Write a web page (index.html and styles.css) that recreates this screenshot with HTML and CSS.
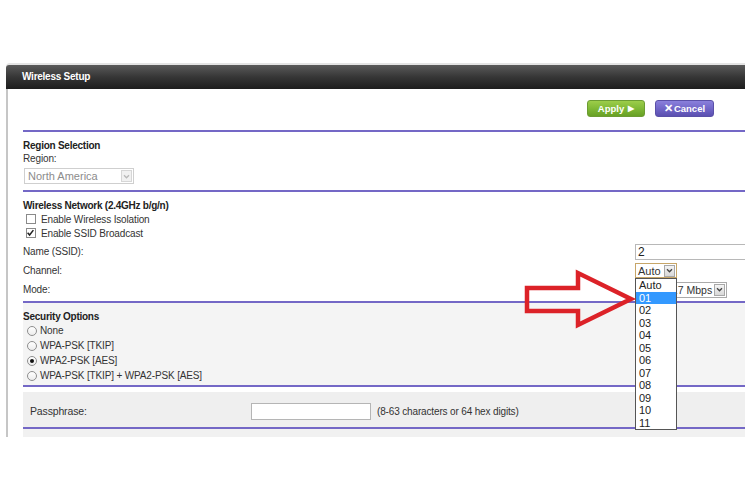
FILE: index.html
```html
<!doctype html>
<html>
<head>
	<meta charset="utf-8">
	<title>Wireless Setup</title>
	<link rel="stylesheet" href="styles.css">
</head>
<body>
<div class="frame">
	<div class="hdr">Wireless Setup</div>
	<div class="body">
		<div class="actions">
			<span class="btn apply">Apply <i>&#9654;</i></span>
			<span class="btn cancel"><b>&#10005;</b>Cancel</span>
		</div>

		<div class="sec region">
			<div class="title">Region Selection</div>
			<div class="line">Region:</div>
			<div class="sel sel-off">
				<span class="val">North America</span>
				<span class="arr"><svg width="9" height="9" viewBox="0 0 9 9"><path d="M2 3.2 L4.5 5.8 L7 3.2" fill="none" stroke="#b8b8b8" stroke-width="1.3"/></svg></span>
			</div>
		</div>

		<div class="sec wifi">
			<div class="title">Wireless Network (2.4GHz b/g/n)</div>
			<div class="chk"><span class="box"></span>Enable Wireless Isolation</div>
			<div class="chk"><span class="box"><svg width="10" height="10" viewBox="0 0 10 10"><path d="M1.8 4.6 L4 7.2 L8.2 1.8" fill="none" stroke="#222" stroke-width="1.7"/></svg></span>Enable SSID Broadcast</div>
			<div class="rows">
				<div class="row">
					<span class="lbl">Name (SSID):</span>
					<span class="txt">2</span>
				</div>
				<div class="row">
					<span class="lbl">Channel:</span>
					<div class="sel chan">
						<span class="val">Auto</span>
						<span class="arr"><svg width="9" height="9" viewBox="0 0 9 9"><path d="M2 3.2 L4.5 5.8 L7 3.2" fill="none" stroke="#444" stroke-width="1.3"/></svg></span>
						<ul class="drop">
							<li>Auto</li>
							<li class="hl">01</li>
							<li>02</li>
							<li>03</li>
							<li>04</li>
							<li>05</li>
							<li>06</li>
							<li>07</li>
							<li>08</li>
							<li>09</li>
							<li>10</li>
							<li>11</li>
						</ul>
					</div>
				</div>
				<div class="row">
					<span class="lbl">Mode:</span>
					<div class="sel mode">
						<span class="val">Up to 217 Mbps</span>
						<span class="arr"><svg width="9" height="9" viewBox="0 0 9 9"><path d="M2 3.2 L4.5 5.8 L7 3.2" fill="none" stroke="#444" stroke-width="1.3"/></svg></span>
					</div>
				</div>
			</div>
		</div>

		<div class="sec security">
			<div class="title">Security Options</div>
			<div class="rad"><span class="dot"></span>None</div>
			<div class="rad"><span class="dot"></span>WPA-PSK [TKIP]</div>
			<div class="rad"><span class="dot on"></span>WPA2-PSK [AES]</div>
			<div class="rad"><span class="dot"></span>WPA-PSK [TKIP] + WPA2-PSK [AES]</div>
		</div>

		<div class="sec pass">
			<div class="prow">
				<span class="plbl">Passphrase:</span>
				<span class="pin"></span>
				<span class="hint">(8-63 characters or 64 hex digits)</span>
			</div>
		</div>
		<div class="sec foot"></div>
	</div>

	<!-- red arrow pointing at channel 01 -->
	<svg class="arrow" width="120" height="64" viewBox="0 0 120 64">
		<polygon points="7,20 58,20 58,5 111,31 58,57 58,43 7,43" fill="none" stroke="#dc2228" stroke-width="4.5" stroke-linejoin="miter"/>
	</svg>
</div>
</body>
</html>
```

FILE: styles.css
```css
*{
	margin:0;
	padding:0;
	box-sizing:border-box;
}
html,body{
	overflow:hidden;
}
body{
	background:#fff;
	font:10px "Liberation Sans", Arial, sans-serif;
	letter-spacing:-0.15px;
	color:#333;
}
ul{
	list-style:none;
}
.frame{
	position:relative;
	width:739px;
	margin:63px 0 0 6px;
	border-top:2px solid #e4e4e4;
	border-radius:4px 0 0 0;
}
.hdr{
	height:24px;
	line-height:23px;
	padding-left:16px;
	background:linear-gradient(#5a5a5a, #363636 50%, #1d1d1d);
	color:#fff;
	font-weight:bold;
	letter-spacing:-0.25px;
	border-radius:3px 0 0 0;
}
.body{
	border-left:2px solid #c6c6c6;
	padding-left:15px;
}

/* buttons */
.actions{
	height:41px;
	display:flex;
	justify-content:flex-end;
	align-items:flex-start;
	gap:10px;
	padding:11px 31px 0 0;
}
.btn{
	display:inline-flex;
	align-items:center;
	justify-content:center;
	height:17px;
	border-radius:3px;
	color:#fff;
	font-size:9.5px;
	font-weight:bold;
	letter-spacing:0;
}
.apply{
	width:58px;
	background:linear-gradient(#9ccd4a, #7db734 55%, #68a025);
	border:1px solid #6c9c33;
}
.apply i{
	font-style:normal;
	font-size:8px;
	margin-left:4px;
}
.cancel{
	width:59px;
	background:linear-gradient(#8a80dc, #6f64c6 55%, #5b50b0);
	border:1px solid #5a50a8;
}
.cancel b{
	font-size:11px;
	margin-right:1px;
}

/* sections */
.sec{
	border-top:2px solid #7468c6;
}
.title{
	font-weight:bold;
	line-height:13px;
	letter-spacing:-0.25px;
	color:#222;
}
.line{
	line-height:13px;
}
.region{
	height:60px;
	padding-top:7px;
}
.wifi{
	height:111px;
	padding-top:7px;
}
.security{
	height:84px;
	padding-top:7px;
	background:#f4f4f4;
}
.pass{
	height:42px;
	padding-top:5px;
}
.foot{
	height:10px;
	background:#f1f1f1;
}

/* selects */
.sel{
	position:relative;
	display:flex;
	align-items:center;
	justify-content:space-between;
	background:#fff;
	border:1px solid #aaa;
	white-space:nowrap;
	font-size:11px;
	letter-spacing:0;
}
.sel .val{
	padding-left:2px;
	overflow:hidden;
}
.sel .arr{
	flex:none;
	display:flex;
	align-items:center;
	justify-content:center;
	width:11px;
	height:12px;
	margin-right:1px;
	background:linear-gradient(#f4f4f4, #d8d8d8);
	border:1px solid #a8a8a8;
}
.sel-off{
	width:110px;
	height:16px;
	margin:3px 0 0 1px;
	border-color:#cfcfcf;
	color:#8c8c8c;
}
.sel-off .val{
	padding-left:3px;
}
.sel-off .arr{
	background:#f1f1f1;
	border-color:#d6d6d6;
}
.chan{
	width:42px;
	height:15px;
	border-color:#c7a668;
}
.mode{
	width:92px;
	height:16px;
	font-size:10.5px;
}
.mode .val{
	flex:1;
	text-align:right;
	padding-right:3px;
}

/* dropdown list */
.drop{
	position:absolute;
	z-index:5;
	top:14px;
	left:-1px;
	width:42px;
	background:#fff;
	border:1px solid #555;
}
.drop li{
	height:12.5px;
	line-height:12.5px;
	padding-left:3px;
	color:#222;
}
.drop li.hl{
	background:#3399ff;
	color:#fff;
}

/* checkboxes */
.chk{
	display:flex;
	align-items:center;
	height:14px;
}
.box{
	display:flex;
	width:10px;
	height:10px;
	margin:0 5px 0 3px;
	border:1px solid #8a8a8a;
	background:#fff;
}
.box svg{
	margin:-1px 0 0 -1px;
}

/* form rows */
.rows{
	padding-top:2px;
}
.row{
	display:flex;
	align-items:center;
	height:19px;
}
.lbl{
	width:612px;
	flex:none;
}
.txt{
	width:114px;
	height:16px;
	line-height:14px;
	padding-left:2px;
	border:1px solid #b8b8b8;
	border-right:0;
	background:#fff;
	color:#222;
	font-size:12px;
	letter-spacing:0;
}

/* radios */
.rad{
	display:flex;
	align-items:center;
	height:15px;
}
.dot{
	display:flex;
	align-items:center;
	justify-content:center;
	width:10px;
	height:10px;
	margin:0 3px 0 4px;
	border:1px solid #8e8e8e;
	border-radius:50%;
	background:linear-gradient(#fff, #ececec);
}
.dot.on::after{
	content:"";
	width:4px;
	height:4px;
	border-radius:50%;
	background:#111;
}

/* passphrase */
.prow{
	display:flex;
	align-items:center;
	height:35px;
	padding:3px 0 0 7px;
	background:#efefef;
}
.plbl{
	width:221px;
	flex:none;
	font-size:10.5px;
}
.pin{
	width:120px;
	height:17px;
	border:1px solid #b5b5b5;
	background:#fff;
}
.hint{
	margin-left:6px;
}

/* arrow overlay */
.arrow{
	position:absolute;
	z-index:6;
	left:514px;
	top:203px;
}
```
